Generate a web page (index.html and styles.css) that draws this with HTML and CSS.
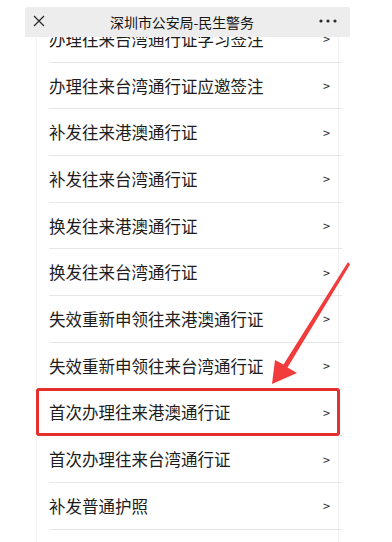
FILE: index.html
```html
<!DOCTYPE html>
<html lang="zh-CN">
<head>
    <meta charset="UTF-8">
    <meta name="viewport" content="width=device-width, initial-scale=1.0">
    <title>深圳市公安局-民生警务</title>
    <link rel="stylesheet" href="styles.css">
</head>
<body>
    <div class="phone">
        <div class="topbar">
            <svg class="close" width="12" height="12" viewBox="0 0 12 12">
                <path d="M1 1L11 11M11 1L1 11" stroke="#2b2b2b" stroke-width="1.3" fill="none"/>
            </svg>
            <div class="title">深圳市公安局-民生警务</div>
            <svg class="more" width="18" height="4" viewBox="0 0 18 4">
                <circle cx="2" cy="2" r="1.6" fill="#2b2b2b"/>
                <circle cx="9" cy="2" r="1.6" fill="#2b2b2b"/>
                <circle cx="16" cy="2" r="1.6" fill="#2b2b2b"/>
            </svg>
        </div>
        <div class="viewport">
            <div class="card">
                <div class="row"><span>办理往来台湾通行证学习签注</span><span class="go">&gt;</span></div>
                <div class="row"><span>办理往来台湾通行证应邀签注</span><span class="go">&gt;</span></div>
                <div class="row"><span>补发往来港澳通行证</span><span class="go">&gt;</span></div>
                <div class="row"><span>补发往来台湾通行证</span><span class="go">&gt;</span></div>
                <div class="row"><span>换发往来港澳通行证</span><span class="go">&gt;</span></div>
                <div class="row"><span>换发往来台湾通行证</span><span class="go">&gt;</span></div>
                <div class="row"><span>失效重新申领往来港澳通行证</span><span class="go">&gt;</span></div>
                <div class="row"><span>失效重新申领往来台湾通行证</span><span class="go">&gt;</span></div>
                <div class="row marked"><span>首次办理往来港澳通行证</span><span class="go">&gt;</span></div>
                <div class="row"><span>首次办理往来台湾通行证</span><span class="go">&gt;</span></div>
                <div class="row"><span>补发普通护照</span><span class="go">&gt;</span></div>
            </div>
        </div>
    </div>

    <!-- annotation arrow pointing at the marked row -->
    <svg class="pointer" width="392" height="542" viewBox="0 0 392 542">
        <polygon points="348,262 350,264.5 287.5,367.5 297,373 272,384 275,360 283.5,364.5" fill="#f23b3b"/>
    </svg>
</body>
</html>
```

FILE: styles.css
```css
body {
    margin: 0;
    width: 392px;
    height: 542px;
    overflow: hidden;
    background: #fff;
    font-family: "Noto Sans CJK SC", "Noto Sans", sans-serif;
    position: relative;
}

.phone {
    margin-left: 25px;
    width: 325px;
    padding-top: 7px;
}

.topbar {
    position: relative;
    z-index: 2;
    height: 30px;
    background: #ededed;
    border-radius: 3px 3px 0 0;
    display: flex;
    align-items: center;
    justify-content: space-between;
    padding: 0 13px 0 8px;
}

.title {
    font-size: 14px;
    color: #151515;
    letter-spacing: -0.1px;
}

.close {
    margin-top: -2px;
}

.more {
    margin-top: -3px;
}

.viewport {
    height: 505px;
    overflow: hidden;
}

.card {
    margin: -21px 11px 0;
    padding-bottom: 40px;
    background: #fff;
    border-left: 1px solid #f1f1f1;
    border-right: 1px solid #f1f1f1;
}

.row {
    position: relative;
    height: 45.7px;
    margin-left: 12px;
    margin-right: -4px;
    padding-right: 12px;
    border-bottom: 1px solid #e6e6e6;
    display: flex;
    align-items: center;
    justify-content: space-between;
    font-size: 16.5px;
    color: #1d1d1d;
}

.go {
    font-size: 12.5px;
    color: #2a2a2a;
}

.marked::after {
    content: "";
    position: absolute;
    left: -13px;
    right: 2px;
    top: -2px;
    bottom: -1px;
    border: 3px solid #e3302d;
    border-radius: 3px;
}

.pointer {
    position: absolute;
    left: 0;
    top: 0;
    pointer-events: none;
}
```
